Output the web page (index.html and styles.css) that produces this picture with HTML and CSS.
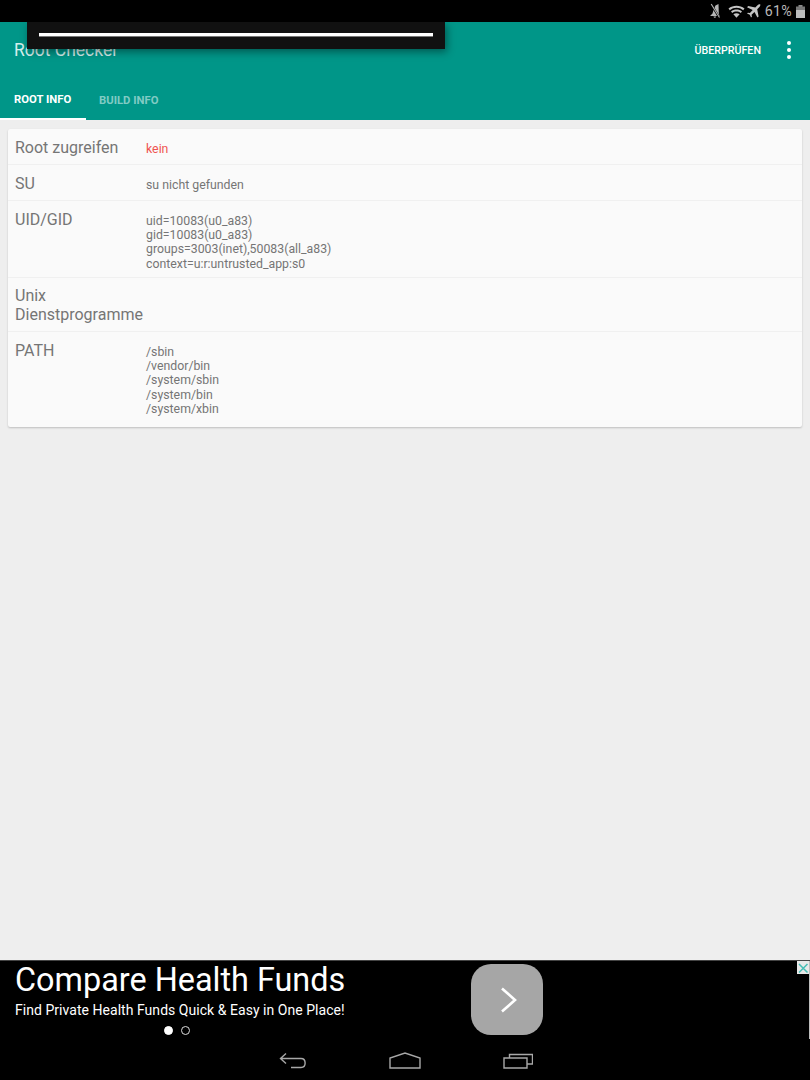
FILE: index.html
```html
<!DOCTYPE html>
<html lang="de">
<head>
<meta charset="utf-8">
<title>Root Checker</title>
<link rel="stylesheet" href="styles.css">
</head>
<body>
<div class="screen">
  <div class="statusbar">
    <svg class="st-mute" width="14" height="16" viewBox="0 0 14 16"><path d="M10.500 1 7.500 2.500 5.500 7 4.500 10.500 2 13h9.500L10.800 10.500z" fill="#b5b5b5"/><path d="M5.500 13.500c.3 1.800 2.300 1.800 2.600 0z" fill="#b5b5b5"/><path d="M3 1 11.500 15" stroke="#000" stroke-width="2.200"/><path d="M3.200 1 11.500 14.500" stroke="#b5b5b5" stroke-width="1.100"/></svg>
    <svg class="st-wifi" width="17" height="13" viewBox="0 0 17 13"><path d="M.5 3.600C5 -.2 12 -.2 16.500 3.600l-1.300 1.600C11.200 1.900 5.800 1.900 1.800 5.200z" fill="#c4c4c4"/><path d="M3 6.500c3.200-2.600 7.800-2.600 11 0l-1.300 1.500c-2.500-1.900-5.900-1.900-8.400 0z" fill="#c4c4c4"/><path d="M5.400 9.200c1.900-1.400 4.300-1.400 6.200 0L8.500 12.800z" fill="#c4c4c4"/></svg>
    <svg class="st-plane" width="15" height="14" viewBox="0 0 15 14"><path d="M14.400.6c-.7-.7-2-.3-2.900.6L9.300 3.400 2.200 2 1 3.200l5.700 2.900-2.800 2.900-2-.3L1 9.600l2.800 1.200L5 13.600l.9-.9-.3-2 2.900-2.800 2.900 5.700 1.200-1.200-1.400-7.100 2.200-2.200c.9-.9 1.300-2.200.6-2.900z" fill="#c4c4c4"/></svg>
    <span class="st-pct">61%</span>
    <svg class="st-batt" width="9" height="13" viewBox="0 0 9 13"><rect x="2.500" y="0" width="4" height="2" fill="#8a8a8a"/><rect x="0" y="1.500" width="9" height="4" fill="#777"/><rect x="0" y="5" width="9" height="8" fill="#bdbdbd"/></svg>
  </div>

  <header class="appbar">
    <div class="toolbar">
      <span class="app-title">Root Checker</span>
      <span class="action">ÜBERPRÜFEN</span>
      <span class="overflow"><i></i><i></i><i></i></span>
    </div>
    <nav class="tabs">
      <span class="tab tab-active">ROOT INFO</span>
      <span class="tab tab-idle">BUILD INFO</span>
    </nav>
    <div class="toast"><div class="toast-line"></div></div>
  </header>

  <main class="content">
    <section class="card">
      <div class="row">
        <div class="label">Root zugreifen</div>
        <div class="value value-red">kein</div>
      </div>
      <div class="row">
        <div class="label">SU</div>
        <div class="value">su nicht gefunden</div>
      </div>
      <div class="row row-uid">
        <div class="label">UID/GID</div>
        <div class="value">uid=10083(u0_a83)<br>gid=10083(u0_a83)<br>groups=3003(inet),50083(all_a83)<br>context=u:r:untrusted_app:s0</div>
      </div>
      <div class="row row-unix">
        <div class="label">Unix<br>Dienstprogramme</div>
      </div>
      <div class="row row-path">
        <div class="label">PATH</div>
        <div class="value">/sbin<br>/vendor/bin<br>/system/sbin<br>/system/bin<br>/system/xbin</div>
      </div>
    </section>
  </main>

  <aside class="ad">
    <div class="ad-text">
      <div class="ad-title">Compare Health Funds</div>
      <div class="ad-sub">Find Private Health Funds Quick &amp; Easy in One Place!</div>
      <div class="ad-dots"><span class="dot dot-on"></span><span class="dot"></span></div>
    </div>
    <div class="ad-btn">
      <svg class="ad-chevron" width="20" height="26" viewBox="0 0 20 26"><path d="M3 1.500 16 13 3 24.500" fill="none" stroke="#fff" stroke-width="2.600"/></svg>
    </div>
    <div class="ad-close">
      <svg width="12" height="12" viewBox="0 0 12 12"><path d="M2 2 10.500 10.500M10.500 2 2 10.500" stroke="#45bdb5" stroke-width="1.500"/></svg>
    </div>
  </aside>

  <footer class="navbar">
    <svg width="30" height="18" viewBox="-2 0 30 18"><path d="M7 1.500 1.500 6.500 7 11.500M1.500 6.500H22c5.500 0 5.500 9 0 9H12" fill="none" stroke="#a8a8a8" stroke-width="1.400"/></svg>
    <svg width="32" height="17" viewBox="0 0 32 17"><path d="M1 16V6L16 1l15 5v10z" fill="none" stroke="#a8a8a8" stroke-width="1.400"/></svg>
    <svg width="30" height="17" viewBox="0 0 30 17"><path d="M1 6h23v10H1z" fill="none" stroke="#a8a8a8" stroke-width="1.400"/><path d="M6.500 6V2.500h23V12H24" fill="none" stroke="#a8a8a8" stroke-width="1.400"/></svg>
  </footer>
</div>
</body>
</html>
```
FILE: styles.css
```css
* { box-sizing: border-box; }
html, body { margin: 0; padding: 0; background: #eeeeee; }
.screen {
  width: 810px;
  height: 1080px;
  display: flex;
  flex-direction: column;
  overflow: hidden;
  font-family: Roboto, "Liberation Sans", sans-serif;
}

.statusbar {
  height: 22px;
  flex: none;
  background: #000;
  display: flex;
  align-items: center;
  justify-content: flex-end;
  padding-right: 5px;
}
.st-mute { margin-right: 6px; }
.st-wifi { margin-right: 1px; }
.st-plane { margin-right: 4px; }
.st-pct { color: #b8b8b8; font-size: 14.200px; letter-spacing: .3px; margin-right: 4px; }

.appbar {
  height: 98px;
  flex: none;
  position: relative;
  background: #009688;
  display: flex;
  flex-direction: column;
}
.toolbar {
  height: 56px;
  display: flex;
  align-items: center;
  padding: 0 19px 0 14px;
}
.app-title { color: #d5efec; font-size: 17.500px; flex: 1; }
.action { color: #fff; font-size: 10.700px; font-weight: 500; margin-right: 26px; }
.overflow { display: flex; flex-direction: column; gap: 3px; }
.overflow i { width: 4px; height: 4px; border-radius: 50%; background: #fff; display: block; }

.tabs { flex: 1; display: flex; }
.tab {
  display: flex;
  align-items: center;
  font-size: 11.300px;
  font-weight: 700;
  padding: 3px 14px 0;
  height: 42px;
  white-space: nowrap;
}
.tab-active { color: #fff; width: 86px; border-bottom: 2px solid #fff; }
.tab-idle { color: #80cbc4; padding-left: 13px; }

.toast {
  position: absolute;
  left: 27px;
  top: 0;
  width: 418px;
  height: 27px;
  background: #111;
  box-shadow: 2px 3px 8px rgba(0, 0, 0, .4);
  padding: 11px 12px 0;
}
.toast-line { height: 3px; background: #fff; box-shadow: 0 1px 0 #777; }

.content { flex: 1; padding: 9px 8px 0; min-height: 0; }
.card {
  background: #fafafa;
  border-radius: 2px;
  box-shadow: 0 1px 2px rgba(0, 0, 0, .2);
}
.row {
  display: flex;
  padding: 10px 7px 0;
  height: 36px;
  border-bottom: 1px solid #f0f0f0;
}
.row-uid { height: 77px; }
.row-unix { height: 54px; }
.row-path { height: 95px; border-bottom: 0; }
.label {
  width: 131px;
  flex: none;
  color: #757575;
  font-size: 16px;
  line-height: 18.500px;
}
.row-unix .label { margin-top: -1px; }
.value {
  color: #757575;
  font-size: 12.300px;
  line-height: 14.200px;
  padding-top: 3px;
}
.value-red { color: #ef5350; }

.ad {
  height: 85px;
  flex: none;
  position: relative;
  background: #000;
  border-top: 1px solid #444;
  display: flex;
}
.ad::after {
  content: "";
  position: absolute;
  right: 0;
  top: 0;
  width: 1px;
  height: 78px;
  background: #bdbdbd;
}
.ad-text { width: 471px; padding: 1px 0 0 15px; flex: none; }
.ad-title { color: #fff; font-size: 32.400px; line-height: 36px; white-space: nowrap; }
.ad-sub { color: #fff; font-size: 14px; line-height: 17px; margin-top: 4px; white-space: nowrap; letter-spacing: .04px; }
.ad-dots { display: flex; gap: 8px; margin: 7px 0 0 149px; }
.dot { width: 9px; height: 9px; border-radius: 50%; border: 1px solid #ddd; }
.dot-on { background: #fff; border-color: #fff; }
.ad-btn {
  width: 72px;
  height: 71px;
  margin-top: 3px;
  border-radius: 20px;
  background: #a6a6a6;
  display: flex;
  align-items: center;
  justify-content: center;
}
.ad-chevron { margin-left: 3px; }
.ad-close {
  position: absolute;
  right: 1px;
  top: 0;
  width: 12px;
  height: 13px;
  background: #e8e8e8;
  display: flex;
  align-items: center;
  justify-content: center;
}

.navbar {
  height: 35px;
  flex: none;
  background: #000;
  display: flex;
  justify-content: center;
  gap: 82px;
  padding-top: 7px;
}
```
